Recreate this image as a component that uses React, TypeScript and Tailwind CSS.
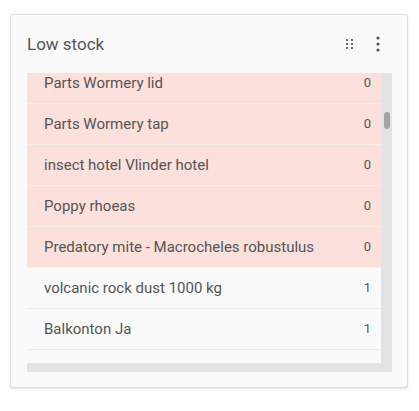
const rows = [
  { name: "Parts Wormery lid", qty: 0 },
  { name: "Parts Wormery tap", qty: 0 },
  { name: "insect hotel Vlinder hotel", qty: 0 },
  { name: "Poppy rhoeas", qty: 0 },
  { name: "Predatory mite - Macrocheles robustulus", qty: 0 },
  { name: "volcanic rock dust 1000 kg", qty: 1 },
  { name: "Balkonton Ja", qty: 1 },
];

function GripIcon() {
  return (
    <svg width="8" height="10" viewBox="0 0 8 10" className="fill-[#6b6b6b]">
      <rect x="0" y="0" width="2" height="2" />
      <rect x="5" y="0" width="2" height="2" />
      <rect x="0" y="4" width="2" height="2" />
      <rect x="5" y="4" width="2" height="2" />
      <rect x="0" y="8" width="2" height="2" />
      <rect x="5" y="8" width="2" height="2" />
    </svg>
  );
}

function KebabIcon() {
  return (
    <svg width="4" height="16" viewBox="0 0 4 16" className="fill-[#555]">
      <circle cx="2" cy="2" r="1.6" />
      <circle cx="2" cy="8" r="1.6" />
      <circle cx="2" cy="14" r="1.6" />
    </svg>
  );
}

export default function App() {
  return (
    <div className="w-[419px] h-[411px] bg-white pt-[14px] pl-[10px] font-['Roboto',sans-serif]">
      <div className="w-[398px] h-[374px] bg-[#fafafa] border border-[#dcdcdc] rounded-[3px] shadow-[0_1px_2px_rgba(0,0,0,0.12)] flex flex-col">
        <div className="flex items-center h-[58px] pl-[16px] pr-[27px]">
          <h2 className="text-[17px] text-[#555] flex-1 pt-[1px]">Low stock</h2>
          <div className="flex items-center gap-[22px]">
            <GripIcon />
            <KebabIcon />
          </div>
        </div>
        <div className="ml-[16px] w-[365px] flex flex-col">
          <div className="flex h-[290px]">
            <div className="w-[354px] overflow-hidden">
              <div className="-mt-[10px]">
                {rows.map((r) => (
                  <div
                    key={r.name}
                    className={`flex items-center justify-between h-[41px] pl-[17px] pr-[10px] text-[15px] border-b ${
                      r.qty === 0 ? "bg-[#fbe0dc] border-[#f6ecea]" : "bg-[#fafafa] border-[#ececec]"
                    }`}
                  >
                    <span className="text-[#555]">{r.name}</span>
                    <span className="text-[#555] text-[13px]">{r.qty}</span>
                  </div>
                ))}
              </div>
            </div>
            <div className="w-[11px] bg-[#e3e3e3] pt-[39px] pl-[3px]">
              <div className="w-[6px] h-[17px] rounded-full bg-[#a3a3a3]" />
            </div>
          </div>
          <div className="h-[9px] bg-[#e3e3e3]" />
        </div>
      </div>
    </div>
  );
}
